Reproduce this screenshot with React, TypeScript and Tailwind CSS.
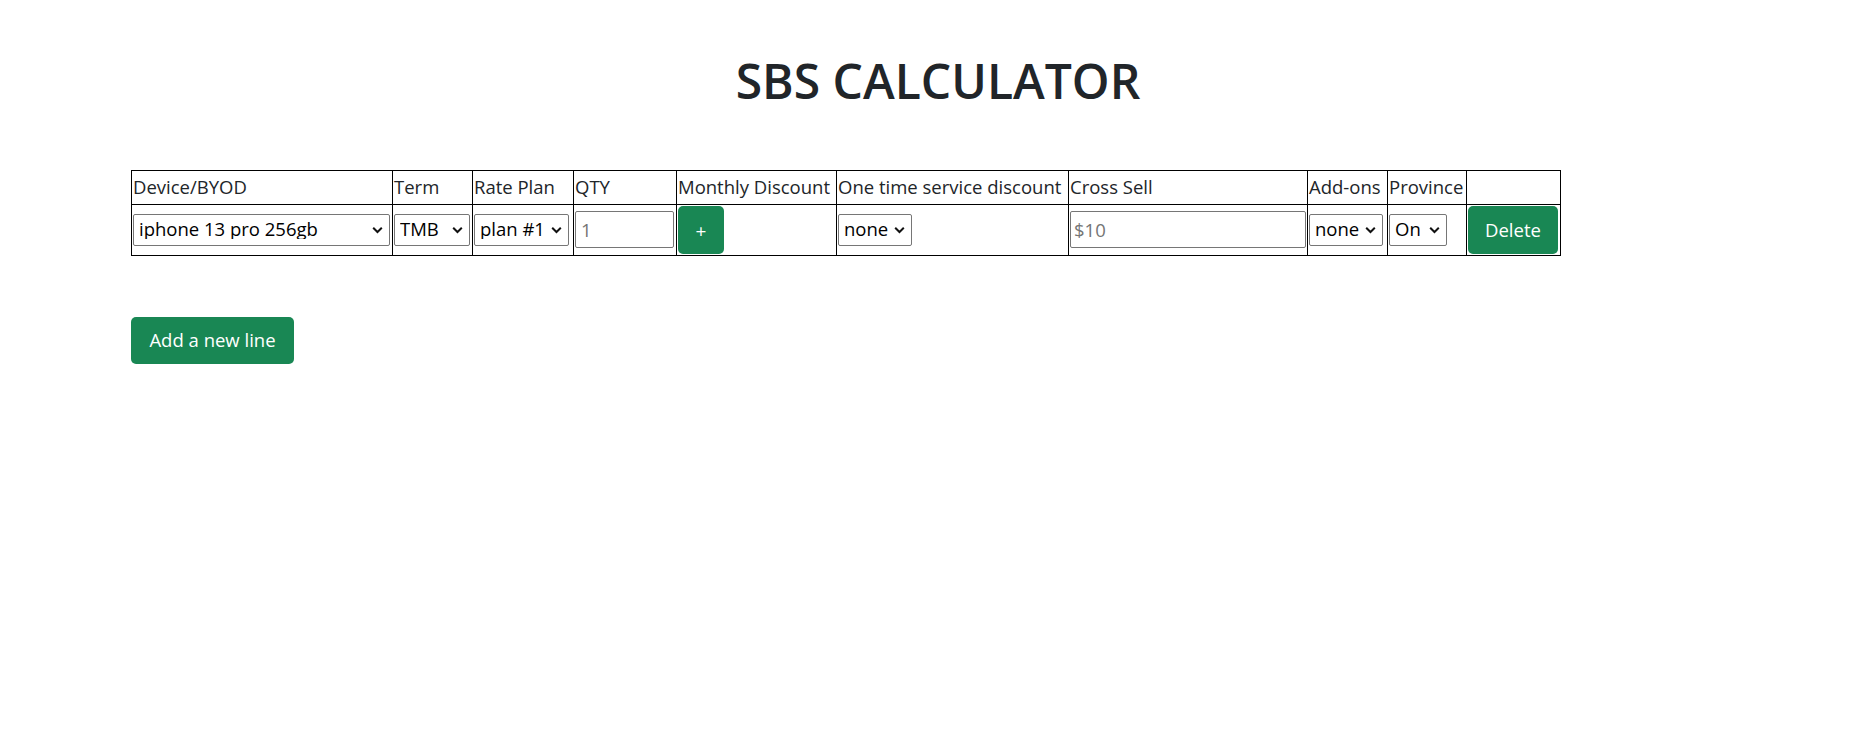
import { useState } from "react"

const font = { fontFamily: '"Open Sans", "Noto Sans", sans-serif' }

const Chevron = () => (
  <svg
    width="11"
    height="8"
    viewBox="0 0 11 8"
    className="pointer-events-none absolute right-[7px] top-1/2 -translate-y-1/2"
  >
    <path d="M1.2 1.8 L5.5 6 L9.8 1.8" fill="none" stroke="#111" strokeWidth="2" />
  </svg>
)

type SelectProps = { value: string; options: string[]; width: string }

const Select = ({ value, options, width }: SelectProps) => {
  const [val, setVal] = useState(value)
  return (
    <div className={`relative inline-block align-middle ${width}`}>
      <select
        value={val}
        onChange={(e) => setVal(e.target.value)}
        className="h-[32px] w-full appearance-none rounded-[2px] border border-[#767676] bg-white pl-[5px] pr-[20px] text-[18.5px] leading-none text-black outline-none"
      >
        {options.map((o) => (
          <option key={o}>{o}</option>
        ))}
      </select>
      <Chevron />
    </div>
  )
}

const headers = [
  { label: "Device/BYOD", w: "w-[261px]" },
  { label: "Term", w: "w-[80px]" },
  { label: "Rate Plan", w: "w-[101px]" },
  { label: "QTY", w: "w-[103px]" },
  { label: "Monthly Discount", w: "w-[160px]" },
  { label: "One time service discount", w: "w-[232px]" },
  { label: "Cross Sell", w: "w-[239px]" },
  { label: "Add-ons", w: "w-[80px]" },
  { label: "Province", w: "w-[79px]" },
  { label: "", w: "w-[94px]" },
]

export default function App() {
  const [lines, setLines] = useState([0])

  return (
    <div className="min-h-screen bg-white text-[#212529]" style={font}>
      <h1 className="pt-[52px] text-center text-[48px] font-semibold leading-[1.2]">
        SBS CALCULATOR
      </h1>

      <div className="mt-[60px] pl-[131px]">
        <table className="w-[1430px] table-fixed border-collapse text-[18.5px]">
          <thead>
            <tr className="h-[34px]">
              {headers.map((h, i) => (
                <th
                  key={i}
                  className={`${h.w} overflow-hidden whitespace-nowrap border border-black p-px text-left align-middle font-normal`}
                >
                  {h.label}
                </th>
              ))}
            </tr>
          </thead>
          <tbody>
            {lines.map((id) => (
              <tr key={id} className="h-[51px]">
                <td className="border border-black p-px align-middle">
                  <Select
                    value="iphone 13 pro 256gb"
                    options={["iphone 13 pro 256gb", "BYOD"]}
                    width="w-[257px]"
                  />
                </td>
                <td className="border border-black p-px align-middle">
                  <Select value="TMB" options={["TMB", "24M"]} width="w-[76px]" />
                </td>
                <td className="border border-black p-px align-middle">
                  <Select value="plan #1" options={["plan #1", "plan #2"]} width="w-[95px]" />
                </td>
                <td className="border border-black p-px align-middle">
                  <input
                    placeholder="1"
                    className="h-[37px] w-[99px] rounded-[2px] border border-[#767676] px-[5px] align-middle text-[18.5px] outline-none placeholder:text-[#757575]"
                  />
                </td>
                <td className="border border-black p-px align-middle">
                  <button className="h-[48px] w-[46px] rounded-[5px] bg-[#198754] align-middle text-[19px] leading-none text-white">
                    <span className="relative top-[2px]">+</span>
                  </button>
                </td>
                <td className="border border-black p-px align-middle">
                  <Select value="none" options={["none", "$50"]} width="w-[74px]" />
                </td>
                <td className="border border-black p-px align-middle">
                  <input
                    placeholder="$10"
                    className="h-[37px] w-[236px] rounded-[2px] border border-[#767676] px-[3px] align-middle text-[18.5px] outline-none placeholder:text-[#757575]"
                  />
                </td>
                <td className="border border-black p-px align-middle">
                  <Select value="none" options={["none", "Watch"]} width="w-[74px]" />
                </td>
                <td className="border border-black p-px align-middle">
                  <Select value="On" options={["On", "QC", "BC"]} width="w-[58px]" />
                </td>
                <td className="border border-black p-px align-middle">
                  <button
                    onClick={() => setLines(lines.filter((l) => l !== id))}
                    className="h-[48px] w-[90px] rounded-[5px] bg-[#198754] align-middle text-[18.5px] text-white"
                  >
                    Delete
                  </button>
                </td>
              </tr>
            ))}
          </tbody>
        </table>

        <button
          onClick={() => setLines([...lines, Date.now()])}
          className="mt-[61px] h-[47px] w-[163px] rounded-[5px] bg-[#198754] text-[18.5px] text-white"
        >
          Add a new line
        </button>
      </div>
    </div>
  )
}
